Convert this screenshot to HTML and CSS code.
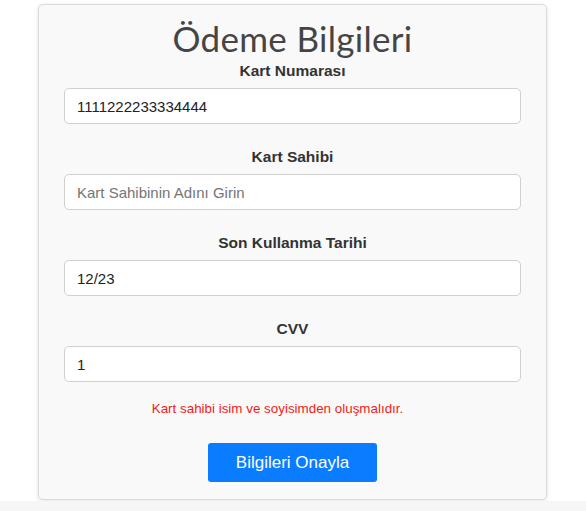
FILE: index.html
```html
<!DOCTYPE html>
<html lang="tr">
<head>
<meta charset="utf-8">
<title>Ödeme Bilgileri</title>
<link rel="stylesheet" href="styles.css">
</head>
<body>
<div class="page">
  <form class="card">
    <h1 class="title">Ödeme Bilgileri</h1>
    <div class="group">
      <label class="label">Kart Numarası</label>
      <input class="field" type="text" value="1111222233334444">
    </div>
    <div class="group">
      <label class="label">Kart Sahibi</label>
      <input class="field" type="text" placeholder="Kart Sahibinin Adını Girin">
    </div>
    <div class="group">
      <label class="label">Son Kullanma Tarihi</label>
      <input class="field" type="text" value="12/23">
    </div>
    <div class="group">
      <label class="label">CVV</label>
      <input class="field" type="text" value="1">
    </div>
    <p class="error">Kart sahibi isim ve soyisimden oluşmalıdır.</p>
    <div class="actions">
      <button class="btn" type="button">Bilgileri Onayla</button>
    </div>
  </form>
  <div class="strip"></div>
</div>
</body>
</html>
```
FILE: styles.css
```css
* { box-sizing: border-box; }
html, body {
  margin: 0;
  padding: 0;
  background: #fff;
  font-family: "Liberation Sans", Arial, sans-serif;
}
.page {
  display: flex;
  flex-direction: column;
  height: 511px;
  overflow: hidden;
}
.card {
  margin: 4px 0 0 38px;
  width: 509px;
  height: 496px;
  background: #f9f9f9;
  border: 1px solid #dcdcdc;
  border-radius: 5px;
  box-shadow: 0 1px 4px rgba(0,0,0,0.12);
  padding: 15px 25px 0;
  display: flex;
  flex-direction: column;
}
.title {
  margin: 0;
  font-family: Lato, "Open Sans", sans-serif;
  font-weight: 400;
  font-size: 35px;
  letter-spacing: 0.3px;
  line-height: 36px;
  color: #454545;
  text-align: center;
}
.group {
  display: flex;
  flex-direction: column;
  gap: 7px;
  margin-top: 5px;
}
.group + .group { margin-top: 23px; }
.label {
  font-weight: bold;
  font-size: 15.5px;
  line-height: 20px;
  color: #333;
  text-align: center;
}
.field {
  height: 36px;
  width: 100%;
  border: 1px solid #d0d0d0;
  border-radius: 5px;
  background: #fff;
  padding: 0 12px;
  font-family: "Liberation Sans", Arial, sans-serif;
  font-size: 15px;
  color: #222;
  outline: none;
}
.field::placeholder { color: #757575; }
.error {
  margin: 19px 0 0;
  padding-right: 30px;
  font-size: 13.4px;
  line-height: 16px;
  color: #f21b1b;
  text-align: center;
}
.actions {
  display: flex;
  justify-content: center;
  margin-top: 26px;
}
.btn {
  width: 169px;
  height: 39px;
  border: 0;
  border-radius: 3px;
  background: #0a7cff;
  color: #fff;
  font-family: "Liberation Sans", Arial, sans-serif;
  font-size: 17px;
}
.strip {
  margin-top: 1px;
  height: 10px;
  background: #f6f6f6;
}
```
